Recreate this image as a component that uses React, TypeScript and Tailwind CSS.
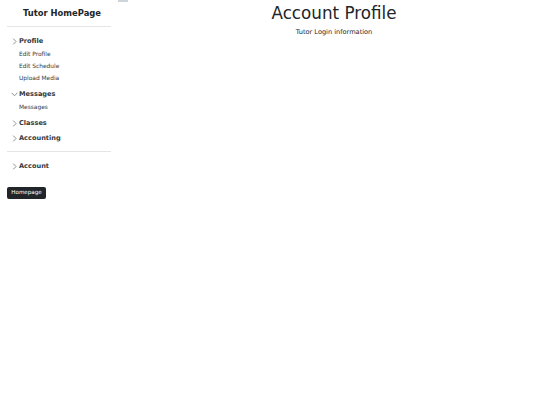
import React, { useState } from 'react';

type Group = { label: string; items: string[]; chevronOpen: boolean };

const groups: Group[] = [
  { label: 'Profile', items: ['Edit Profile', 'Edit Schedule', 'Upload Media'], chevronOpen: false },
  { label: 'Messages', items: ['Messages'], chevronOpen: true },
  { label: 'Classes', items: [], chevronOpen: false },
  { label: 'Accounting', items: [], chevronOpen: false },
];

const Chevron: React.FC<{ open: boolean }> = ({ open }) => (
  <span className="flex w-[10px] h-full items-center justify-center -mt-[1px]">
    {open ? (
      <svg width="7" height="5" viewBox="0 0 7 5" fill="none">
        <path d="M0.6 0.8 L3.5 3.8 L6.4 0.8" stroke="#6c757d" strokeWidth="0.8" />
      </svg>
    ) : (
      <svg width="5" height="7" viewBox="0 0 5 7" fill="none">
        <path d="M1.2 0.6 L4 3.5 L1.2 6.4" stroke="#6c757d" strokeWidth="0.8" />
      </svg>
    )}
  </span>
);

const NavGroup: React.FC<{ group: Group; open: boolean; onToggle: () => void }> = ({ group, open, onToggle }) => (
  <li className="mb-[1px]">
    <button
      onClick={onToggle}
      className="flex h-[14px] items-center pl-[2px] text-[6.6px] font-bold text-[#343a40]"
    >
      <Chevron open={group.chevronOpen} />
      <span>{group.label}</span>
    </button>
    {open && group.items.length > 0 && (
      <ul className="-mt-[1px] pb-[3px] pl-[12px]">
        {group.items.map((item) => (
          <li key={item} className="flex h-[12px] items-center text-[5.9px] text-[#343a40]">
            {item}
          </li>
        ))}
      </ul>
    )}
  </li>
);

export default function App() {
  const [open, setOpen] = useState<Record<string, boolean>>({ Profile: true, Messages: true });
  const [accountOpen, setAccountOpen] = useState(false);

  return (
    <div className="flex min-h-[405px] w-full bg-white font-['DejaVu_Sans',sans-serif] text-[#212529]">
      <aside className="flex w-[118px] shrink-0 flex-col px-[7px]">
        <div className="flex h-[27px] items-center justify-center border-b border-[#e5e5e5] pl-[6px] pt-[1px] text-[8.4px] font-bold text-[#212529]">
          Tutor HomePage
        </div>
        <ul className="mt-[8px]">
          {groups.map((g) => (
            <NavGroup
              key={g.label}
              group={g}
              open={!!open[g.label]}
              onToggle={() => setOpen({ ...open, [g.label]: !open[g.label] })}
            />
          ))}
        </ul>
        <div className="mt-[4px] border-t border-[#e5e5e5]" />
        <div className="mt-[8px]">
          <button
            onClick={() => setAccountOpen(!accountOpen)}
            className="flex h-[14px] items-center pl-[2px] text-[6.6px] font-bold text-[#343a40]"
          >
            <Chevron open={accountOpen} />
            <span>Account</span>
          </button>
        </div>
        <div className="mt-[13px] flex">
          <span className="flex h-[12px] w-[39px] items-center justify-center rounded-[2px] bg-[#212529] text-[5.6px] leading-none text-white">
            Homepage
          </span>
        </div>
      </aside>

      <div className="w-[10px] shrink-0">
        <div className="h-[2px] w-full bg-[#ced4da]" />
      </div>

      <main className="flex-1 text-center">
        <h1 className="mt-[3px] text-[16.76px] leading-[20px] text-[#212529]">Account Profile</h1>
        <p className="mt-[4px] text-[6.6px] leading-[10px] text-[#212529]">Tutor Login information</p>
      </main>
    </div>
  );
}
